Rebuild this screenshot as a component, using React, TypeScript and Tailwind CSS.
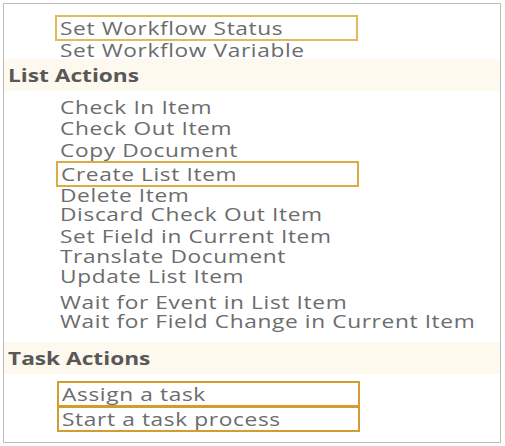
import React from 'react';

type Row = { label: string; kind: 'item' | 'box' | 'head'; cls: string };

const rows: Row[] = [
  { label: 'Set Workflow Status', kind: 'box', cls: 'mt-[11px] h-[26px] ml-[51px] border-[#e0bb5a]' },
  { label: 'Set Workflow Variable', kind: 'item', cls: 'h-[18px]' },
  { label: 'List Actions', kind: 'head', cls: 'h-[32px]' },
  { label: 'Check In Item', kind: 'item', cls: 'mt-[7px] h-[18px]' },
  { label: 'Check Out Item', kind: 'item', cls: 'mt-[3px] h-[18px]' },
  { label: 'Copy Document', kind: 'item', cls: 'mt-[4px] h-[18px]' },
  { label: 'Create List Item', kind: 'box', cls: 'mt-[2px] h-[26px] ml-[52px] border-[#d9ad45]' },
  { label: 'Delete Item', kind: 'item', cls: 'h-[16px]' },
  { label: 'Discard Check Out Item', kind: 'item', cls: 'mt-[2px] h-[18px]' },
  { label: 'Set Field in Current Item', kind: 'item', cls: 'mt-[4px] h-[18px]' },
  { label: 'Translate Document', kind: 'item', cls: 'mt-[2px] h-[18px]' },
  { label: 'Update List Item', kind: 'item', cls: 'mt-[2px] h-[18px]' },
  { label: 'Wait for Event in List Item', kind: 'item', cls: 'mt-[8px] h-[18px]' },
  { label: 'Wait for Field Change in Current Item', kind: 'item', cls: 'mt-[1px] h-[18px]' },
  { label: 'Task Actions', kind: 'head', cls: 'mt-[12px] h-[32px]' },
  { label: 'Assign a task', kind: 'box', cls: 'mt-[7px] h-[26px] ml-[53px] border-[#d29c2e]' },
  { label: 'Start a task process', kind: 'box', cls: '-mt-[1px] h-[26px] ml-[53px] border-[#d29c2e]' },
];

const Stretch: React.FC<{ children: React.ReactNode }> = ({ children }) => (
  <span className="inline-block origin-left scale-x-[1.26] whitespace-nowrap">{children}</span>
);

const App: React.FC = () => {
  return (
    <div className="h-[446px] w-[505px] bg-white p-[3px] font-['Open_Sans',sans-serif]">
      <div className="h-[440px] w-[498px] border border-[#bcbcbc] text-[18px] leading-none tracking-[0.5px] text-[#6c6c6c]">
        {rows.map((r) => {
          if (r.kind === 'head') {
            return (
              <div
                key={r.label}
                className={`flex items-center bg-[#fdf9ee] pl-[4px] font-bold tracking-normal text-[#585858] ${r.cls}`}
              >
                <Stretch>{r.label}</Stretch>
              </div>
            );
          }
          if (r.kind === 'box') {
            return (
              <div key={r.label} className={`flex w-[303px] items-center border-2 pl-[3px] ${r.cls}`}>
                <Stretch>{r.label}</Stretch>
              </div>
            );
          }
          return (
            <div key={r.label} className={`flex items-center pl-[56px] ${r.cls}`}>
              <Stretch>{r.label}</Stretch>
            </div>
          );
        })}
      </div>
    </div>
  );
};

export default App;
